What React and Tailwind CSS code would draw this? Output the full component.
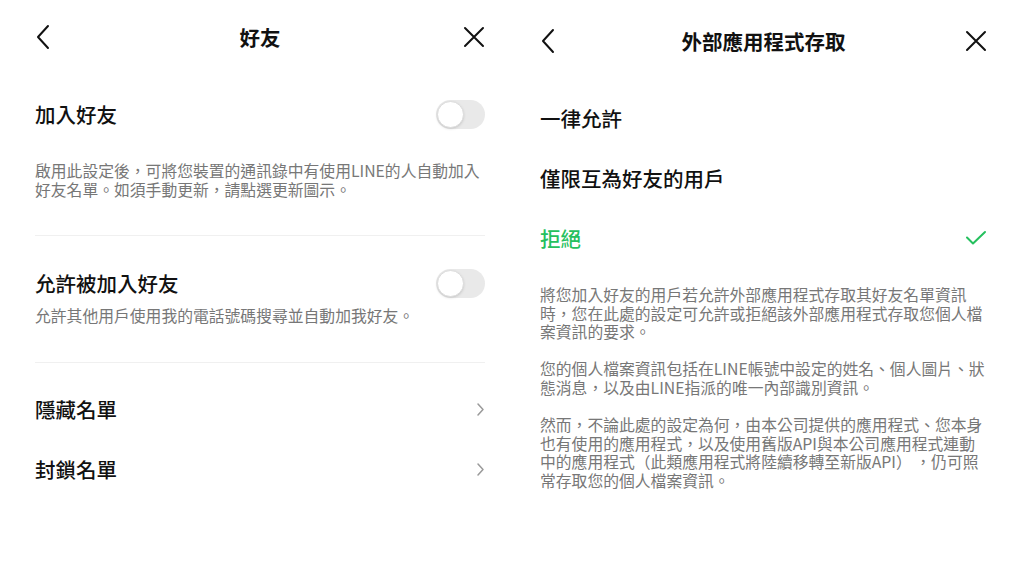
import React from "react";

const font = { fontFamily: '"Noto Sans CJK TC", "Noto Sans", sans-serif' };

function BackIcon() {
  return (
    <svg width="16" height="26" viewBox="0 0 16 26" fill="none" stroke="#111" strokeWidth="2" strokeLinecap="round" strokeLinejoin="round">
      <path d="M13 2 L3 13 L13 24" />
    </svg>
  );
}

function CloseIcon() {
  return (
    <svg width="22" height="22" viewBox="0 0 22 22" fill="none" stroke="#111" strokeWidth="2" strokeLinecap="round">
      <path d="M2 2 L20 20 M20 2 L2 20" />
    </svg>
  );
}

function Chevron() {
  return (
    <svg width="9" height="15" viewBox="0 0 9 15" fill="none" stroke="#9a9a9a" strokeWidth="1.5" strokeLinecap="round" strokeLinejoin="round">
      <path d="M2 2 L7 7.5 L2 13" />
    </svg>
  );
}

function Check() {
  return (
    <svg width="22" height="16" viewBox="0 0 22 16" fill="none" stroke="#25c05e" strokeWidth="2" strokeLinecap="round" strokeLinejoin="round">
      <path d="M2 7.5 L8 13.5 L20 2" />
    </svg>
  );
}

function Toggle() {
  return (
    <div className="w-[49px] h-[29px] rounded-full bg-[#e9e9e9] p-[1px] flex items-center">
      <div className="w-[27px] h-[27px] rounded-full bg-white border border-[#dcdcdc] shadow-sm" />
    </div>
  );
}

function Header({ title }) {
  return (
    <div className="h-[42px] flex items-center justify-between">
      <div className="w-[24px] flex items-center"><BackIcon /></div>
      <div className="text-[20.5px] font-bold text-[#111]">{title}</div>
      <div className="w-[24px] flex items-center justify-end"><CloseIcon /></div>
    </div>
  );
}

function FriendsPanel() {
  return (
    <div className="w-[512px] pt-[16px] pl-[35px] pr-[27px]">
      <Header title="好友" />

      <div className="mt-[28px] h-[56px] flex items-center justify-between">
        <span className="text-[20.5px] font-medium text-[#111]">加入好友</span>
        <Toggle />
      </div>
      <p className="mt-[20px] text-[15.8px] leading-[18.6px] text-[#777]">
        啟用此設定後，可將您裝置的通訊錄中有使用LINE的人自動加入好友名單。如須手動更新，請點選更新圖示。
      </p>

      <div className="mt-[36px] border-t border-[#f0f0f0]" />

      <div className="mt-[33px] h-[28px] flex items-center justify-between">
        <span className="text-[20.5px] font-medium text-[#111]">允許被加入好友</span>
        <Toggle />
      </div>
      <p className="mt-[10px] text-[15.8px] leading-[18.6px] text-[#777]">
        允許其他用戶使用我的電話號碼搜尋並自動加我好友。
      </p>

      <div className="mt-[36px] border-t border-[#f0f0f0]" />

      <div className="mt-[17px]">
        {["隱藏名單", "封鎖名單"].map((t) => (
          <div key={t} className="h-[60px] flex items-center justify-between">
            <span className="text-[20.5px] font-medium text-[#111]">{t}</span>
            <Chevron />
          </div>
        ))}
      </div>
    </div>
  );
}

function AccessPanel() {
  const options = [
    { label: "一律允許", selected: false },
    { label: "僅限互為好友的用戶", selected: false },
    { label: "拒絕", selected: true },
  ];
  return (
    <div className="w-[512px] pt-[20px] pl-[28px] pr-[37px]">
      <Header title="外部應用程式存取" />

      <div className="mt-[26px]">
        {options.map((o) => (
          <div key={o.label} className="h-[60px] flex items-center justify-between">
            <span className={`text-[20.5px] font-medium ${o.selected ? "text-[#25c05e]" : "text-[#111]"}`}>
              {o.label}
            </span>
            {o.selected && <Check />}
          </div>
        ))}
      </div>

      <div className="mt-[18px] flex flex-col gap-[18.6px] text-[15.8px] leading-[18.6px] text-[#777]">
        <p>將您加入好友的用戶若允許外部應用程式存取其好友名單資訊時，您在此處的設定可允許或拒絕該外部應用程式存取您個人檔案資訊的要求。</p>
        <p>您的個人檔案資訊包括在LINE帳號中設定的姓名、個人圖片、狀態消息，以及由LINE指派的唯一內部識別資訊。</p>
        <p>
          然而，不論此處的設定為何，由本公司提供的應用程式、您本身也有使用的應用程式，以及使用舊版API與本公司應用程式連動中的應用程式（此類應用程式將陸續移轉至新版API） ，仍可照
          <br />
          常存取您的個人檔案資訊。
        </p>
      </div>
    </div>
  );
}

export default function App() {
  return (
    <div className="w-[1024px] h-[576px] bg-white flex overflow-hidden" style={font}>
      <FriendsPanel />
      <AccessPanel />
    </div>
  );
}
